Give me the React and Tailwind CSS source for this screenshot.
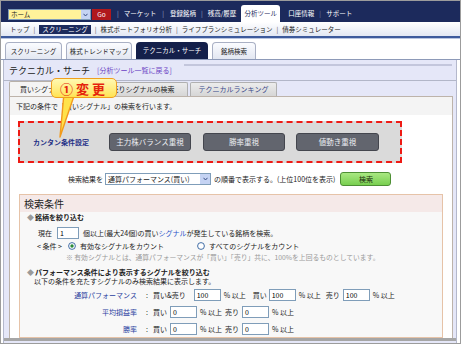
import React from "react";

// tiny helpers for the repeated bits
const Sep = ({ className = "" }) => <span className={`px-[4px] ${className}`}>|</span>;

const Box = ({ value, w = "w-[27px]" }) => (
  <span className={`inline-flex h-[12px] ${w} items-center border border-[#7f9db9] bg-white pl-[2px] text-[7px] text-black`}>
    {value}
  </span>
);

const Radio = ({ on }) => (
  <svg width="8" height="8" viewBox="0 0 8 8" className="shrink-0">
    <circle cx="4" cy="4" r="3.4" fill="#fff" stroke="#2c5d9c" strokeWidth="0.9" />
    {on && <circle cx="4" cy="4" r="1.7" fill="#2a8a3a" />}
  </svg>
);

const Arrow = () => (
  <svg width="5" height="4" viewBox="0 0 5 4">
    <path d="M0.5 0.8 L2.5 3 L4.5 0.8" fill="none" stroke="#3a4f85" strokeWidth="1" />
  </svg>
);

const PresetButton = ({ children, w }) => (
  <div className={`flex h-[18px] ${w} items-center justify-center rounded-[3px] border border-[#44464e] bg-[#62656e] text-[7.5px] text-[#eceef2]`}>
    {children}
  </div>
);

const PerfRow = ({ label, children }) => (
  <div className="flex h-[14px] items-center">
    <span className="w-[117px] text-right text-[#2b3fa0]">{label}</span>
    <span className="ml-[9px] mr-[5px]">:</span>
    {children}
  </div>
);

export default function App() {
  return (
    <div className="relative flex h-[344px] w-[461px] flex-col overflow-hidden border border-[#9c9c9c] bg-white font-['Noto_Sans_CJK_JP',sans-serif] text-[7px] leading-none text-[#222]">
      {/* global nav */}
      <div className="flex h-[21px] shrink-0 items-end bg-[#1c2a5c] pl-[7px] text-[6.5px] text-white">
        <div className="mb-[2px] flex h-[11px] w-[83px] items-center border border-[#7f9db9] bg-[#fff39a]">
          <span className="flex-1 pl-[2px] text-[#222]">ホーム</span>
          <span className="flex h-full w-[9px] items-center justify-center bg-[#c5d3f3]">
            <Arrow />
          </span>
        </div>
        <div className="mb-[2px] ml-[1px] flex h-[11px] w-[19px] items-center justify-center bg-[#b0181c]">Go</div>
        <div className="mb-[6px] ml-[1px] flex items-center">
          <Sep className="px-[5px] text-[#9aa5c8]" />
          <span>マーケット</span>
          <Sep className="px-[6px] text-[#9aa5c8]" />
          <span>登録銘柄</span>
          <Sep className="px-[5px] text-[#9aa5c8]" />
          <span>残高/履歴</span>
        </div>
        <div className="ml-[5px] flex h-[17px] w-[39px] items-center justify-center rounded-t-[3px] bg-white text-[#1c2a5c]">
          分析ツール
        </div>
        <div className="mb-[6px] ml-[8px] flex items-center">
          <span>口座情報</span>
          <Sep className="px-[5px] text-[#6c7ab0]" />
          <span>サポート</span>
        </div>
      </div>

      {/* sub nav */}
      <div className="flex h-[14px] shrink-0 items-center bg-gradient-to-b from-[#ffffff] to-[#e2e7f3] pl-[9px] text-[6.5px] text-[#222]">
        <span>トップ</span>
        <Sep className="text-[#555]" />
        <span className="flex h-[9px] items-center bg-[#1c2a5c] px-[3px] text-white">スクリーニング</span>
        <Sep className="text-[#555]" />
        <span>株式ポートフォリオ分析</span>
        <Sep className="text-[#555]" />
        <span>ライフプランシミュレーション</span>
        <Sep className="text-[#555]" />
        <span>債券シミュレーター</span>
      </div>
      <div className="h-[2px] shrink-0 bg-[#3d5a9c]" />
      <div className="h-[1px] shrink-0 bg-[#b8c4e0]" />

      {/* tool tabs */}
      <div className="flex h-[21px] shrink-0 items-end gap-[4px] border-b border-[#8d9ab8] bg-white pl-[4px] text-[6.5px]">
        <div className="flex h-[17px] w-[57px] items-center justify-center rounded-t-[4px] border border-b-0 border-[#a9b0c4] bg-gradient-to-b from-[#fbfcff] to-[#e3e7f1]">
          スクリーニング
        </div>
        <div className="flex h-[17px] w-[66px] items-center justify-center rounded-t-[4px] border border-b-0 border-[#a9b0c4] bg-gradient-to-b from-[#fbfcff] to-[#e3e7f1]">
          株式トレンドマップ
        </div>
        <div className="flex h-[17px] w-[72px] items-center justify-center rounded-t-[4px] bg-[#14204a] text-white">
          テクニカル・サーチ
        </div>
        <div className="flex h-[17px] w-[44px] items-center justify-center rounded-t-[4px] border border-b-0 border-[#a9b0c4] bg-gradient-to-b from-[#fbfcff] to-[#e3e7f1]">
          銘柄検索
        </div>
      </div>

      {/* lavender work area */}
      <div className="flex min-h-0 flex-1 flex-col border-l border-r border-[#b4b8cc] bg-[#e5e7f8] ml-[2px] mr-[3px]">
        <div className="flex h-[21px] shrink-0 items-center border-b border-[#b2b6c8] pl-[5px]">
          <span className="text-[9px] text-[#222]">テクニカル・サーチ</span>
          <span className="ml-[7px] text-[#6b3fc4]">[分析ツール一覧に戻る]</span>
          <div className="ml-[12px] mr-[4px] mb-[11px] h-[2px] flex-1 bg-[#c3c6dc]" />
        </div>

        {/* signal tabs */}
        <div className="flex h-[15px] shrink-0 items-end gap-[2px] pl-[5px] text-[7px]">
          <div className="flex h-[15px] w-[87px] items-center rounded-t-[2px] border border-b-0 border-[#b7b0a8] bg-[#f4f4f4] pl-[10px]">
            買いシグナルの検索
          </div>
          <div className="flex h-[14px] w-[90px] items-center justify-center rounded-t-[2px] border border-b-0 border-[#b0b0b0] bg-gradient-to-b from-[#ececec] to-[#d6d6d6]">
            売りシグナルの検索
          </div>
          <div className="flex h-[14px] w-[87px] items-center justify-center rounded-t-[2px] border border-b-0 border-[#b0b0b0] bg-gradient-to-b from-[#ececec] to-[#d6d6d6] text-[#3a4a8a]">
            テクニカルランキング
          </div>
        </div>

        {/* content */}
        <div className="ml-[5px] mr-[3px] flex min-h-0 flex-1 flex-col border-l border-r border-t border-[#bdb3aa] bg-white">
          <div className="flex h-[18px] shrink-0 items-center bg-[#f4f4f4] pl-[6px]">
            下記の条件で「買いシグナル」の検索を行います。
          </div>

          <div className="ml-[8px] mt-[6px] flex h-[42px] w-[384px] shrink-0 items-center border-2 border-dashed border-[#ee1a14] bg-[#dadada]">
            <span className="ml-[13px] w-[76px] text-[7px] font-bold text-[#1e2f86]">カンタン条件設定</span>
            <PresetButton w="w-[82px]">主力株バランス重視</PresetButton>
            <div className="w-[12px]" />
            <PresetButton w="w-[82px]">勝率重視</PresetButton>
            <div className="w-[11px]" />
            <PresetButton w="w-[83px]">値動き重視</PresetButton>
          </div>

          <div className="mt-[9px] flex h-[14px] shrink-0 items-center pl-[58px]">
            <span className="mr-[2px]">検索結果を</span>
            <div className="flex h-[12px] w-[106px] items-center border border-[#7f9db9] bg-white">
              <span className="flex-1 pl-[2px]">通算パフォーマンス(買い)</span>
              <span className="flex h-full w-[10px] items-center justify-center bg-[#c5d3f3]">
                <Arrow />
              </span>
            </div>
            <span className="ml-[3px]">の順番で表示する。(上位100位を表示)</span>
            <div className="ml-[5px] flex h-[14px] w-[51px] items-center justify-center rounded-[3px] border border-[#4d8f34] bg-gradient-to-b from-[#a9e882] to-[#78cf4f] text-[#1b2a10]">
              検索
            </div>
          </div>

          {/* search conditions */}
          <div className="ml-[9px] mt-[8px] flex w-[424px] min-h-0 flex-1 flex-col border border-[#e6c3a8] bg-[#f8f8f8]">
            <div className="flex h-[17px] shrink-0 items-center bg-[#f5e9e8] pl-[4px] text-[10px] text-[#222]">検索条件</div>

            <div className="flex h-[11px] shrink-0 items-center pl-[7px] font-bold">
              <span className="mr-[1px] text-[#9a9a9a]">◆</span>銘柄を絞り込む
            </div>
            <div className="mt-[3px] flex h-[14px] shrink-0 items-center pl-[18px]">
              <span className="mr-[5px]">現在</span>
              <Box value="1" w="w-[22px]" />
              <span className="ml-[4px]">
                個以上(最大24個)の買い<span className="text-[#2a55c8]">シグナル</span>が発生している銘柄を検索。
              </span>
            </div>
            <div className="flex h-[12px] shrink-0 items-center pl-[17px]">
              <span className="mr-[6px]">&lt; 条件 &gt;</span>
              <Radio on />
              <span className="ml-[4px]">有効なシグナルをカウント</span>
              <span className="ml-[33px]" />
              <Radio />
              <span className="ml-[4px]">すべてのシグナルをカウント</span>
            </div>
            <div className="flex h-[10px] shrink-0 items-center pl-[46px] text-[6.8px] text-[#9a9a9a]">
              ※ 有効シグナルとは、通算パフォーマンスが「買い」「売り」共に、100%を上回るものとしています。
            </div>

            <div className="mt-[5px] flex h-[10px] shrink-0 items-center pl-[7px] font-bold">
              <span className="mr-[1px] text-[#9a9a9a]">◆</span>パフォーマンス条件により表示するシグナルを絞り込む
            </div>
            <div className="flex h-[9px] shrink-0 items-center pl-[14px]">以下の条件を充たすシグナルのみ検索結果に表示します。</div>

            <div className="mt-[2px] flex flex-col gap-[3px]">
              <PerfRow label="通算パフォーマンス">
                <span className="mr-[8px]">買い&amp;売り</span>
                <Box value="100" />
                <span className="ml-[3px] mr-[7px]">% 以上</span>
                <span className="mr-[2px]">買い</span>
                <Box value="100" />
                <span className="ml-[3px] mr-[5px]">% 以上</span>
                <span className="mr-[3px]">売り</span>
                <Box value="100" />
                <span className="ml-[3px]">% 以上</span>
              </PerfRow>
              <PerfRow label="平均損益率">
                <span className="mr-[3px]">買い</span>
                <Box value="0" />
                <span className="ml-[3px] mr-[3px]">% 以上</span>
                <span className="mr-[3px]">売り</span>
                <Box value="0" />
                <span className="ml-[3px]">% 以上</span>
              </PerfRow>
              <PerfRow label="勝率">
                <span className="mr-[3px]">買い</span>
                <Box value="0" />
                <span className="ml-[3px] mr-[3px]">% 以上</span>
                <span className="mr-[3px]">売り</span>
                <Box value="0" />
                <span className="ml-[3px]">% 以上</span>
              </PerfRow>
            </div>
          </div>
        </div>
        <div className="h-[3px] shrink-0 bg-[#a6a6a6]" />
        <div className="h-[2px] shrink-0 bg-[#e5e7f8]" />
      </div>

      {/* annotation callout */}
      <div className="pointer-events-none absolute left-[50px] top-[77px]">
        <svg width="30" height="48" viewBox="0 0 30 48" className="absolute left-[4px] top-[14px]">
          <path d="M9 1 L20 1 L5 45 Z" fill="#ffe24a" stroke="#f29a1c" strokeWidth="1.4" strokeLinejoin="round" />
        </svg>
        <div className="relative flex h-[20px] w-[66px] items-center justify-center rounded-[5px] border-[1.5px] border-[#f0a020] bg-gradient-to-b from-[#fff9b0] to-[#ffe350] text-[13px] font-bold tracking-[3px] text-[#e5240e]">
          ①変更
        </div>
      </div>
    </div>
  );
}
